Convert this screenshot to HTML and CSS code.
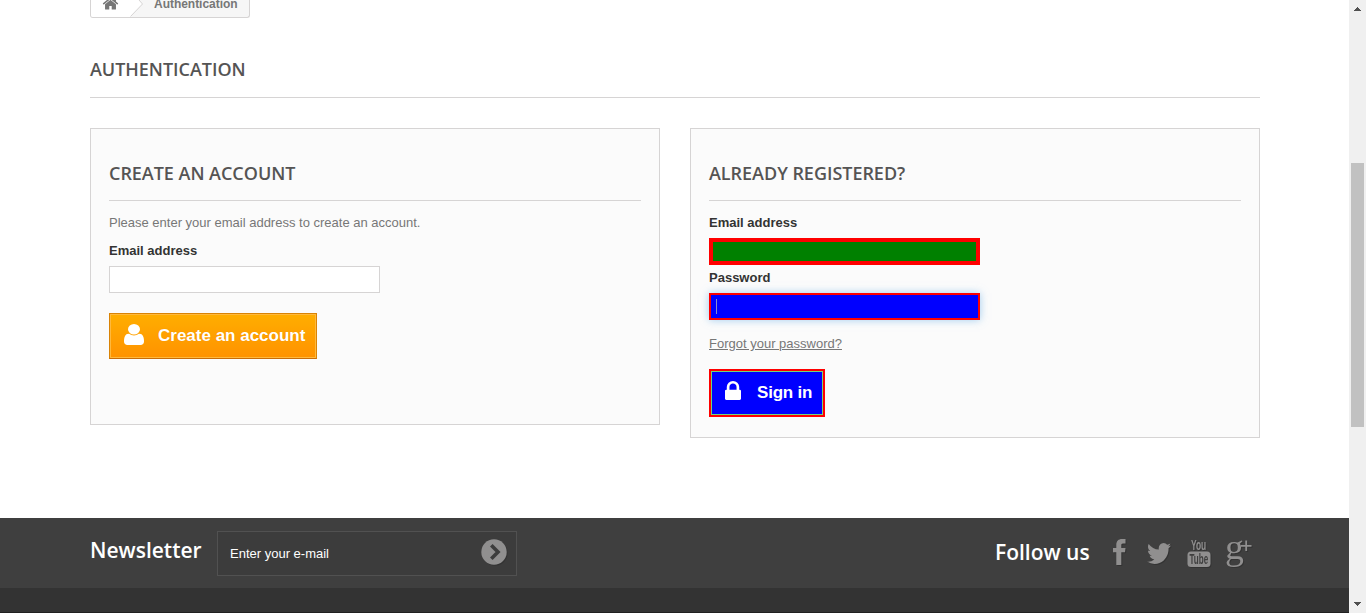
FILE: index.html
```html
<!DOCTYPE html>
<html lang="en">
<head>
<meta charset="utf-8">
<title>Authentication</title>
<link rel="stylesheet" href="styles.css">
</head>
<body>
<div class="window">
  <div class="page">
    <main class="container">
      <nav class="breadcrumb">
        <a class="crumb-home"><svg class="icon-home" viewBox="0 0 1792 1792"><path d="M1472 992v480q0 26-19 45t-45 19h-384v-384h-256v384h-384q-26 0-45-19t-19-45v-480q0-1 .5-3t.5-3l575-474 575 474q1 2 1 6zm223-69l-62 74q-8 9-21 11h-3q-13 0-21-7l-692-577-692 577q-12 8-24 7-13-2-21-11l-62-74q-8-10-7-23.5t11-21.5l719-599q32-26 76-26t76 26l244 204v-195q0-14 9-23t23-9h192q14 0 23 9t9 23v408l219 182q10 8 11 21.5t-7 23.5z"/></svg></a>
        <svg class="crumb-arrow" viewBox="0 0 14 17"><path class="arrow-fill" d="M0 0H9L12.500 4L.5 17H0z"/><path class="arrow-line" d="M9 0L12.500 4L.5 16.500"/></svg>
        <span class="crumb-text">Authentication</span>
      </nav>
      <h1 class="title title-main">AUTHENTICATION</h1>
      <div class="columns">
        <form class="box">
          <h3 class="subtitle">CREATE AN ACCOUNT</h3>
          <p class="hint">Please enter your email address to create an account.</p>
          <label class="label">Email address</label>
          <div class="field"></div>
          <button type="button" class="btn btn-create">
            <svg class="icon-user" viewBox="256 128 1280 1536" preserveAspectRatio="none"><path d="M1536 1399q0 109-62.500 187t-150.500 78h-854q-88 0-150.500-78t-62.500-187q0-85 8.500-160.500t31.500-152 58.500-131 94-89 134.500-34.500q131 128 313 128t313-128q76 0 134.500 34.500t94 89 58.500 131 31.500 152 8.500 160.500zm-256-887q0 159-112.500 271.500t-271.500 112.500-271.500-112.500-112.500-271.500 112.500-271.500 271.500-112.500 271.500 112.500 112.500 271.500z"/></svg>
            <span class="create-text">Create an account</span>
          </button>
        </form>
        <form class="box box-login">
          <h3 class="subtitle">ALREADY REGISTERED?</h3>
          <label class="label">Email address</label>
          <div class="field field-email"></div>
          <label class="label">Password</label>
          <div class="field field-password"><span class="caret"></span></div>
          <p class="forgot"><a class="forgot-link">Forgot your password?</a></p>
          <button type="button" class="btn btn-login">
            <svg class="icon-lock" viewBox="320 128 1152 1408" preserveAspectRatio="none"><path d="M640 768h512v-192q0-106-75-181t-181-75-181 75-75 181v192zm832 96v576q0 40-28 68t-68 28h-960q-40 0-68-28t-28-68v-576q0-40 28-68t68-28h32v-192q0-184 132-316t316-132 316 132 132 316v192h32q40 0 68 28t28 68z"/></svg>
            <span class="login-text">Sign in</span>
          </button>
        </form>
      </div>
    </main>
    <footer class="footer">
      <div class="footer-row">
        <h4 class="footer-title">Newsletter</h4>
        <div class="newsletter">
          <span class="newsletter-text">Enter your e-mail</span>
          <svg class="icon-go" viewBox="0 0 26 26"><circle cx="13" cy="13" r="12.700"/><path class="go-chevron" d="M10.300 6.300l6.700 6.700-6.700 6.700"/></svg>
        </div>
        <h4 class="footer-title follow">Follow us</h4>
        <div class="social">
          <svg class="icon-facebook" viewBox="0 0 13 26"><path d="M12.500 0v4.500H10C8.500 4.500 8.300 5.200 8.300 6.400V9h4.200L12 13.300H8.300V26H3.300V13.300H0V9h3.300V6C3.300 2 5.500 0 9 0z"/></svg>
          <svg class="icon-twitter" viewBox="108 256 1576 1280" preserveAspectRatio="none"><path d="M1684 408q-67 98-162 167 1 14 1 42 0 130-38 259.500t-115.500 248.500-184.500 210.500-258 146-323 54.500q-271 0-496-145 35 4 78 4 225 0 401-138-105-2-188-64.500t-114-159.500q33 5 61 5 43 0 85-11-112-23-185.500-111.500t-73.500-205.500v-4q68 38 146 41-66-44-105-115t-39-154q0-88 44-163 121 149 294.500 238.500t371.500 99.500q-8-38-8-74 0-134 94.500-228.500t228.500-94.500q140 0 236 102 109-21 205-78-37 115-142 178 93-10 186-50z"/></svg>
          <svg class="icon-youtube" viewBox="0 0 24 29"><text class="you" transform="translate(4 10.500) scale(.6 1)">You</text><rect x=".5" y="12.500" width="23" height="15.500" rx="3.500"/><text class="tube" transform="translate(2.500 25.300) scale(.54 1)">Tube</text></svg>
          <svg class="icon-google" viewBox="0 0 28 30"><text class="g" transform="translate(0 21) scale(1.050 1)">g</text><path d="M20.300 2.500h1.800v4.400h4.400v1.800h-4.400v4.400h-1.800V8.700h-4.400V6.900h4.400z"/></svg>
        </div>
      </div>
      <div class="footer-body"></div>
    </footer>
  </div>
  <div class="scrollbar">
    <svg class="scroll-arrow" viewBox="0 0 7 4" shape-rendering="crispEdges"><path d="M3 0h1v1h1v1h1v1h1v1H0V3h1V2h1V1h1z"/></svg>
    <div class="thumb"></div>
    <svg class="scroll-arrow scroll-down" viewBox="0 0 7 4" shape-rendering="crispEdges"><path d="M0 0h7v1H6v1H5v1H4v1H3V3H2V2H1V1H0z"/></svg>
  </div>
</div>
</body>
</html>
```
FILE: styles.css
```css
* { box-sizing: border-box; }
body { margin: 0; background: #fff; color: #777; font: 13px/18px "Liberation Sans", Arial, sans-serif; }
h1, h3, h4, p { margin: 0; }
svg { display: block; flex: none; fill: currentColor; overflow: visible; }
.window { display: flex; width: 1366px; height: 613px; overflow: hidden; }
.page { width: 1349px; display: flex; flex-direction: column; }
.container { width: 1170px; height: 518px; margin-left: 90px; flex: none; }

.breadcrumb { display: flex; width: 160px; height: 18px; border: 1px solid #d6d4d4; border-top: 0; border-radius: 0 0 3px 3px; background: #f6f6f6; font-weight: 700; font-size: 12px; }
.crumb-home { width: 39px; height: 17px; background: #fff; padding-left: 11px; border-radius: 0 0 0 2px; }
.icon-home { width: 17px; height: 17px; margin-top: -5px; }
.crumb-arrow { width: 14px; height: 17px; }
.arrow-fill { fill: #fff; }
.arrow-line { fill: none; stroke: #d6d4d4; }
.crumb-text { margin: -5px 0 0 10px; white-space: nowrap; letter-spacing: -.03px; }

.title, .subtitle { color: #555454; font: 600 18px/20px "Open Sans", sans-serif; letter-spacing: -.03px; border-bottom: 1px solid #d6d4d4; white-space: nowrap; }
.title { margin-top: 41px; height: 39px; }
.columns { display: flex; align-items: flex-start; gap: 30px; margin-top: 30px; }
.box { width: 570px; height: 297px; padding: 34px 18px 0; background: #fbfbfb; border: 1px solid #d6d4d4; }
.box-login { height: 310px; }
.subtitle { height: 38px; margin-bottom: 13px; }
.hint { margin-bottom: 10px; }
.label { display: block; color: #333; font-weight: 700; height: 18px; }
.field { width: 271px; height: 27px; margin-top: 6px; background: #fff; border: 1px solid #d6d4d4; }
.field-email { background: green; border: 4px solid red; margin-bottom: 4px; }
.field-password { background: blue; border: 2px solid red; box-shadow: 0 0 8px rgba(102, 175, 233, .6); padding: 4px 0 0 5px; }
.caret { display: block; width: 1px; height: 15px; background: #8a8ac8; }
.btn { display: flex; font: 700 17px/21px "Liberation Sans", Arial, sans-serif; color: #fff; white-space: nowrap; padding: 0; border-radius: 0; }
.btn-create { width: 208px; height: 46px; margin-top: 20px; border: 1px solid; border-color: #d98305 #d98305 #c86c08; background: linear-gradient(#ffae00, #ff9200); box-shadow: inset 0 0 0 1px #ffb93d; text-shadow: 0 0 1px rgba(200, 100, 0, .3); }
.icon-user { width: 20px; height: 21px; margin: 10px 14px 0 14px; }
.create-text { margin-top: 11px; }
.forgot { margin-top: 15px; }
.forgot-link { text-decoration: underline; }
.btn-login { width: 116px; height: 48px; margin-top: 16px; border: 2px solid red; background: blue; box-shadow: inset 0 0 0 1px #74d578; }
.icon-lock { width: 16px; height: 19px; margin: 10px 16px 0 14px; }
.login-text { margin-top: 11px; letter-spacing: -.2px; }

.footer { height: 95px; flex: none; }
.footer-row { display: flex; height: 70px; padding-left: 90px; background: #3f3f3f; }
.footer-title { color: #fff; font: 600 21px/25px "Open Sans", sans-serif; margin-top: 20px; width: 127px; white-space: nowrap; }
.newsletter { display: flex; width: 300px; height: 45px; margin-top: 13px; background: #3c3c3c; border: 1px solid #515151; padding: 0 9px 0 12px; }
.newsletter-text { color: #fff; margin-top: 13px; }
.icon-go { width: 26px; height: 26px; margin: 7px 0 0 auto; color: #908f8f; filter: drop-shadow(1px 1px 0 #333); }
.go-chevron { fill: none; stroke: #3c3c3c; stroke-width: 3.6; }
.follow { margin: 22px 0 0 478px; width: 118px; }
.social { display: flex; align-items: flex-start; color: #908f8f; filter: drop-shadow(1px 1px 0 #333); }
.icon-facebook { width: 13px; height: 26px; margin-top: 21px; }
.icon-twitter { width: 24px; height: 21px; margin: 25px 0 0 21px; }
.icon-youtube { width: 24px; height: 29px; margin: 21px 0 0 16px; }
.you { font: 700 14px "Liberation Sans", sans-serif; }
.tube { font: 700 15px "Liberation Sans", sans-serif; fill: #3f3f3f; }
.icon-google { width: 28px; height: 30px; margin: 20px 0 0 14px; }
.g { font: 36px "Liberation Serif", serif; }
.footer-body { height: 25px; background: #333; border-bottom: 1px solid #202020; }

.scrollbar { width: 17px; height: 613px; background: #f0f0f0; padding-top: 7px; color: #505050; }
.scroll-arrow { width: 7px; height: 4px; margin-left: 5px; }
.thumb { width: 13px; height: 264px; margin: 152px 0 0 2px; background: #c1c1c1; }
.scroll-down { margin-top: 175px; }
```
